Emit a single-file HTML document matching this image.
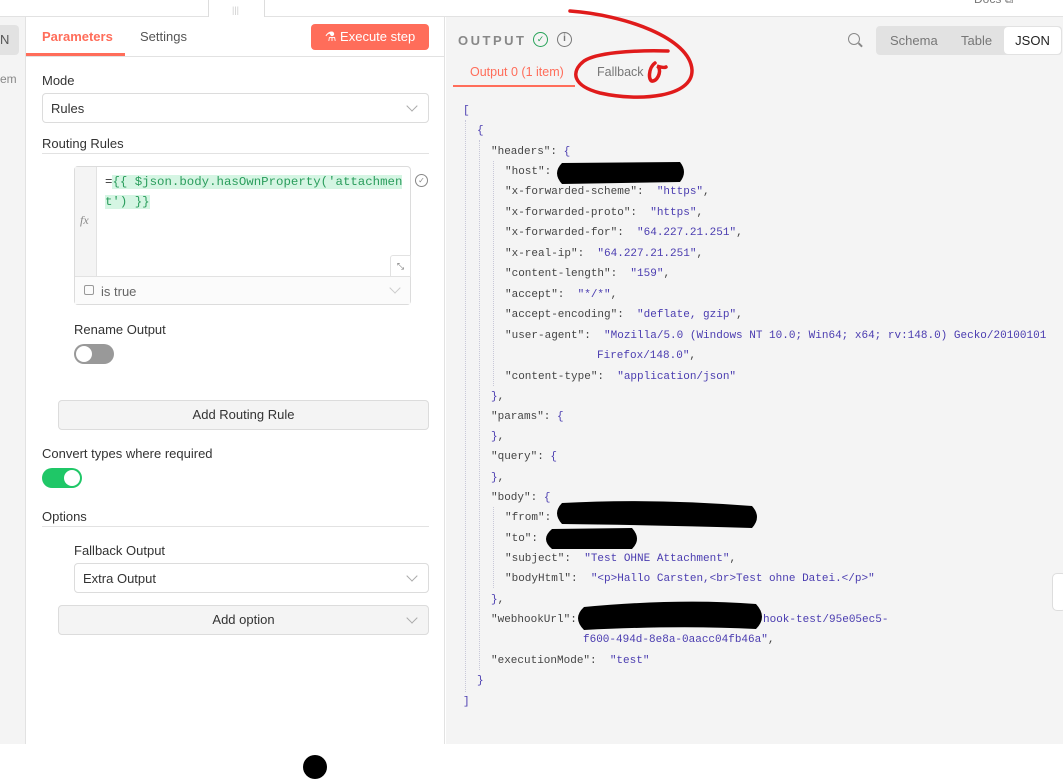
<!DOCTYPE html>
<html><head><meta charset="utf-8"><style>
*{box-sizing:border-box;margin:0;padding:0}
body{width:1063px;height:779px;position:relative;overflow:hidden;background:#fff;font-family:"Liberation Sans",sans-serif;color:#333;font-size:13px}
.a{position:absolute;white-space:nowrap}
.j{position:absolute;white-space:pre;font-family:"Liberation Mono",monospace;font-size:11px;color:#444;line-height:14px}
.s{color:#4a3cb0}
.sel{position:absolute;border:1px solid #dcdcdc;border-radius:4px;background:#fff}
.chev{position:absolute;width:8px;height:8px;border-right:1px solid #aaa;border-bottom:1px solid #aaa;transform:rotate(45deg)}
.btn{position:absolute;border:1px solid #dcdcdc;border-radius:4px;background:#f4f4f4;text-align:center;color:#333}
.vl{position:absolute;border-left:1px dotted #c8c8d8;width:0}
</style></head><body>
<div class="a" style="left:0;top:16px;width:1063px;height:1px;background:#e2e2e2"></div>
<div class="a" style="left:208px;top:0;width:57px;height:17px;border:1px solid #ddd;border-top:none;border-bottom:none;background:#fff"></div>
<div class="a" style="left:232px;top:5px;color:#ccc;font-size:9px">|||</div>
<div class="a" style="left:974px;top:-8px;color:#777;font-size:12px">Docs ⧉</div>
<div class="a" style="left:0;top:17px;width:26px;height:727px;background:#f4f4f4;border-right:1px solid #e2e2e2"></div>
<div class="a" style="left:0;top:25px;width:19px;height:30px;background:#e2e2e2;border-radius:0 4px 4px 0"></div>
<div class="a" style="left:0;top:32px;font-size:13px;color:#555">N</div>
<div class="a" style="left:0;top:72px;font-size:12px;color:#888">em</div>
<div class="a" style="left:26px;top:17px;width:419px;height:727px;background:#fff;border-right:1px solid #e2e2e2"></div>
<div class="a" style="left:26px;top:56px;width:419px;height:1px;background:#e2e2e2"></div>
<div class="a" style="left:42px;top:29px;color:#ff6d5a;font-weight:bold;font-size:13px">Parameters</div>
<div class="a" style="left:26px;top:53px;width:99px;height:3px;background:#ff6d5a"></div>
<div class="a" style="left:140px;top:29px;color:#555;font-size:13px">Settings</div>
<div class="a" style="left:311px;top:24px;width:118px;height:26px;background:#ff6d5a;border-radius:4px;color:#fff;font-size:13px;text-align:center;line-height:26px">⚗ Execute step</div>
<div class="a" style="left:42px;top:73px;font-size:13px">Mode</div>
<div class="sel" style="left:42px;top:93px;width:387px;height:30px"><span class="a" style="left:8px;top:7px">Rules</span><span class="chev" style="right:12px;top:8px"></span></div>
<div class="a" style="left:42px;top:136px;font-size:13px">Routing Rules</div>
<div class="a" style="left:42px;top:153px;width:387px;height:1px;background:#e2e2e2"></div>
<div class="a" style="left:74px;top:166px;width:337px;height:139px;border:1px solid #dcdcdc;border-radius:4px;background:#fff"></div>
<div class="a" style="left:75px;top:167px;width:22px;height:109px;background:#f4f4f4;border-right:1px solid #e2e2e2"></div>
<div class="a" style="left:80px;top:213px;font-family:'Liberation Serif',serif;font-style:italic;color:#888;font-size:12px">fx</div>
<div class="j" style="left:105px;top:172px;font-size:12.4px;line-height:20px;color:#333">=<span style="background:#d5f5e3;color:#2a9d5c">{{ $json.body.hasOwnProperty('attachmen</span><br><span style="background:#d5f5e3;color:#2a9d5c">t') }}</span></div>
<div class="a" style="left:75px;top:276px;width:335px;height:1px;background:#e2e2e2"></div>
<div class="a" style="left:75px;top:277px;width:335px;height:27px;background:#fbfbfb"></div>
<div class="a" style="left:390px;top:255px;width:21px;height:22px;border:1px solid #e2e2e2;border-radius:3px 0 0 0;background:#fff;font-size:9px;color:#777;text-align:center;line-height:20px">⤡</div>
<div class="a" style="left:84px;top:285px;width:10px;height:10px;border:1px solid #999;border-radius:2px"></div>
<div class="a" style="left:101px;top:284px;color:#666;font-size:13px">is true</div>
<div class="chev" style="left:391px;top:284px;border-color:#ccc"></div>
<div class="a" style="left:415px;top:174px;width:13px;height:13px;border:1px solid #888;border-radius:50%;font-size:8px;color:#888;text-align:center;line-height:11px">✓</div>
<div class="a" style="left:74px;top:322px;font-size:13px">Rename Output</div>
<div class="a" style="left:74px;top:344px;width:40px;height:20px;border-radius:10px;background:#999"></div>
<div class="a" style="left:76px;top:346px;width:16px;height:16px;border-radius:50%;background:#fff"></div>
<div class="btn" style="left:58px;top:400px;width:371px;height:30px;line-height:28px">Add Routing Rule</div>
<div class="a" style="left:42px;top:446px;font-size:13px">Convert types where required</div>
<div class="a" style="left:42px;top:468px;width:40px;height:20px;border-radius:10px;background:#1fc767"></div>
<div class="a" style="left:64px;top:470px;width:16px;height:16px;border-radius:50%;background:#fff"></div>
<div class="a" style="left:42px;top:509px;font-size:13px">Options</div>
<div class="a" style="left:42px;top:526px;width:387px;height:1px;background:#e2e2e2"></div>
<div class="a" style="left:74px;top:543px;font-size:13px">Fallback Output</div>
<div class="sel" style="left:74px;top:563px;width:355px;height:30px"><span class="a" style="left:8px;top:7px">Extra Output</span><span class="chev" style="right:12px;top:8px"></span></div>
<div class="btn" style="left:58px;top:605px;width:371px;height:30px;line-height:28px">Add option<span class="chev" style="right:12px;top:8px"></span></div>
<div class="a" style="left:0;top:744px;width:1063px;height:35px;background:#fff"></div>
<div class="a" style="left:303px;top:755px;width:24px;height:24px;border-radius:50%;background:#000"></div>
<div class="a" style="left:446px;top:17px;width:617px;height:727px;background:#f4f4f4"></div>
<div class="a" style="left:458px;top:33px;font-size:13px;letter-spacing:2.5px;color:#888;font-weight:bold">OUTPUT</div>
<div class="a" style="left:533px;top:32px;width:15px;height:15px;border:1.5px solid #29a35a;border-radius:50%;color:#29a35a;font-size:9px;text-align:center;line-height:12px">✓</div>
<div class="a" style="left:557px;top:32px;width:15px;height:15px;border:1.5px solid #777;border-radius:50%;color:#777;font-size:10px;text-align:center;line-height:12px;font-weight:bold">i</div>
<div class="a" style="left:848px;top:33px;width:12px;height:12px;border:1.5px solid #888;border-radius:50%"></div>
<div class="a" style="left:858px;top:44px;width:5px;height:1.5px;background:#888;transform:rotate(45deg)"></div>
<div class="a" style="left:876px;top:26px;width:186px;height:29px;background:#e2e2e2;border-radius:4px"></div>
<div class="a" style="left:890px;top:33px;color:#777">Schema</div>
<div class="a" style="left:961px;top:33px;color:#777">Table</div>
<div class="a" style="left:1004px;top:27px;width:57px;height:27px;background:#fff;border-radius:4px;color:#222;text-align:center;line-height:27px">JSON</div>
<div class="a" style="left:470px;top:65px;color:#ff6d5a;font-size:12.5px">Output 0 (1 item)</div>
<div class="a" style="left:453px;top:85px;width:122px;height:2px;background:#ff6d5a"></div>
<div class="a" style="left:597px;top:65px;color:#777;font-size:12.5px">Fallback</div>
<div class="a" style="left:1052px;top:573px;width:15px;height:38px;background:#fff;border:1px solid #ddd;border-radius:5px"></div>
<div class="vl" style="left:465px;top:120px;height:572px"></div>
<div class="vl" style="left:479px;top:140px;height:530px"></div>
<div class="vl" style="left:493px;top:161px;height:225px"></div>
<div class="vl" style="left:493px;top:507px;height:81px"></div>
<div class="j s" style="left:463px;top:104px">[</div>
<div class="j s" style="left:477px;top:124px">{</div>
<div class="j" style="left:491px;top:145px">"headers": <span class="s">{</span></div>
<div class="j" style="left:505px;top:165px">"host": </div>
<div class="j" style="left:505px;top:185px">"x-forwarded-scheme":  <span class="s">"https"</span>,</div>
<div class="j" style="left:505px;top:206px">"x-forwarded-proto":  <span class="s">"https"</span>,</div>
<div class="j" style="left:505px;top:226px">"x-forwarded-for":  <span class="s">"64.227.21.251"</span>,</div>
<div class="j" style="left:505px;top:247px">"x-real-ip":  <span class="s">"64.227.21.251"</span>,</div>
<div class="j" style="left:505px;top:267px">"content-length":  <span class="s">"159"</span>,</div>
<div class="j" style="left:505px;top:288px">"accept":  <span class="s">"*/*"</span>,</div>
<div class="j" style="left:505px;top:308px">"accept-encoding":  <span class="s">"deflate, gzip"</span>,</div>
<div class="j" style="left:505px;top:329px">"user-agent":  <span class="s">"Mozilla/5.0 (Windows NT 10.0; Win64; x64; rv:148.0) Gecko/20100101</span></div>
<div class="j" style="left:597px;top:349px"><span class="s">Firefox/148.0"</span>,</div>
<div class="j" style="left:505px;top:370px">"content-type":  <span class="s">"application/json"</span></div>
<div class="j s" style="left:491px;top:390px">}<span style="color:#444">,</span></div>
<div class="j" style="left:491px;top:410px">"params": <span class="s">{</span></div>
<div class="j s" style="left:491px;top:430px">}<span style="color:#444">,</span></div>
<div class="j" style="left:491px;top:450px">"query": <span class="s">{</span></div>
<div class="j s" style="left:491px;top:471px">}<span style="color:#444">,</span></div>
<div class="j" style="left:491px;top:491px">"body": <span class="s">{</span></div>
<div class="j" style="left:505px;top:511px">"from": </div>
<div class="j" style="left:505px;top:532px">"to": </div>
<div class="j" style="left:505px;top:552px">"subject":  <span class="s">"Test OHNE Attachment"</span>,</div>
<div class="j" style="left:505px;top:572px">"bodyHtml":  <span class="s">"&lt;p&gt;Hallo Carsten,&lt;br&gt;Test ohne Datei.&lt;/p&gt;"</span></div>
<div class="j s" style="left:491px;top:593px">}<span style="color:#444">,</span></div>
<div class="j" style="left:491px;top:613px">"webhookUrl": </div>
<div class="j s" style="left:763px;top:613px">hook-test/95e05ec5-</div>
<div class="j" style="left:583px;top:633px"><span class="s">f600-494d-8e8a-0aacc04fb46a"</span>,</div>
<div class="j" style="left:491px;top:654px">"executionMode":  <span class="s">"test"</span></div>
<div class="j s" style="left:477px;top:674px">}</div>
<div class="j s" style="left:463px;top:695px">]</div>
<svg class="a" style="left:0;top:0" width="1063" height="779">
<path d="M562,163 L680,162 Q688,172 680,182 L562,184 Q552,173 562,163Z" fill="#000"/>
<path d="M562,503 Q650,498 752,506 Q762,517 752,528 Q650,525 562,524 Q552,513 562,503Z" fill="#000"/>
<path d="M552,529 L632,528 Q642,539 632,549 L552,549 Q540,539 552,529Z" fill="#000"/>
<path d="M584,607 Q680,598 756,604 Q768,617 756,629 Q680,625 584,630 Q572,618 584,607Z" fill="#000"/>
<path d="M570,11 C625,15 690,38 692,70 C693,97 640,102 600,93 C573,86 570,72 584,61 C596,53 630,50 668,51" fill="none" stroke="#e01b1b" stroke-width="3.5" stroke-linecap="round"/>
<path d="M655,63 C648,68 648,82 653,81 C659,80 662,68 657,66 C660,67 664,68 666,67" fill="none" stroke="#e01b1b" stroke-width="3.5" stroke-linecap="round"/>
</svg>
</body></html>
